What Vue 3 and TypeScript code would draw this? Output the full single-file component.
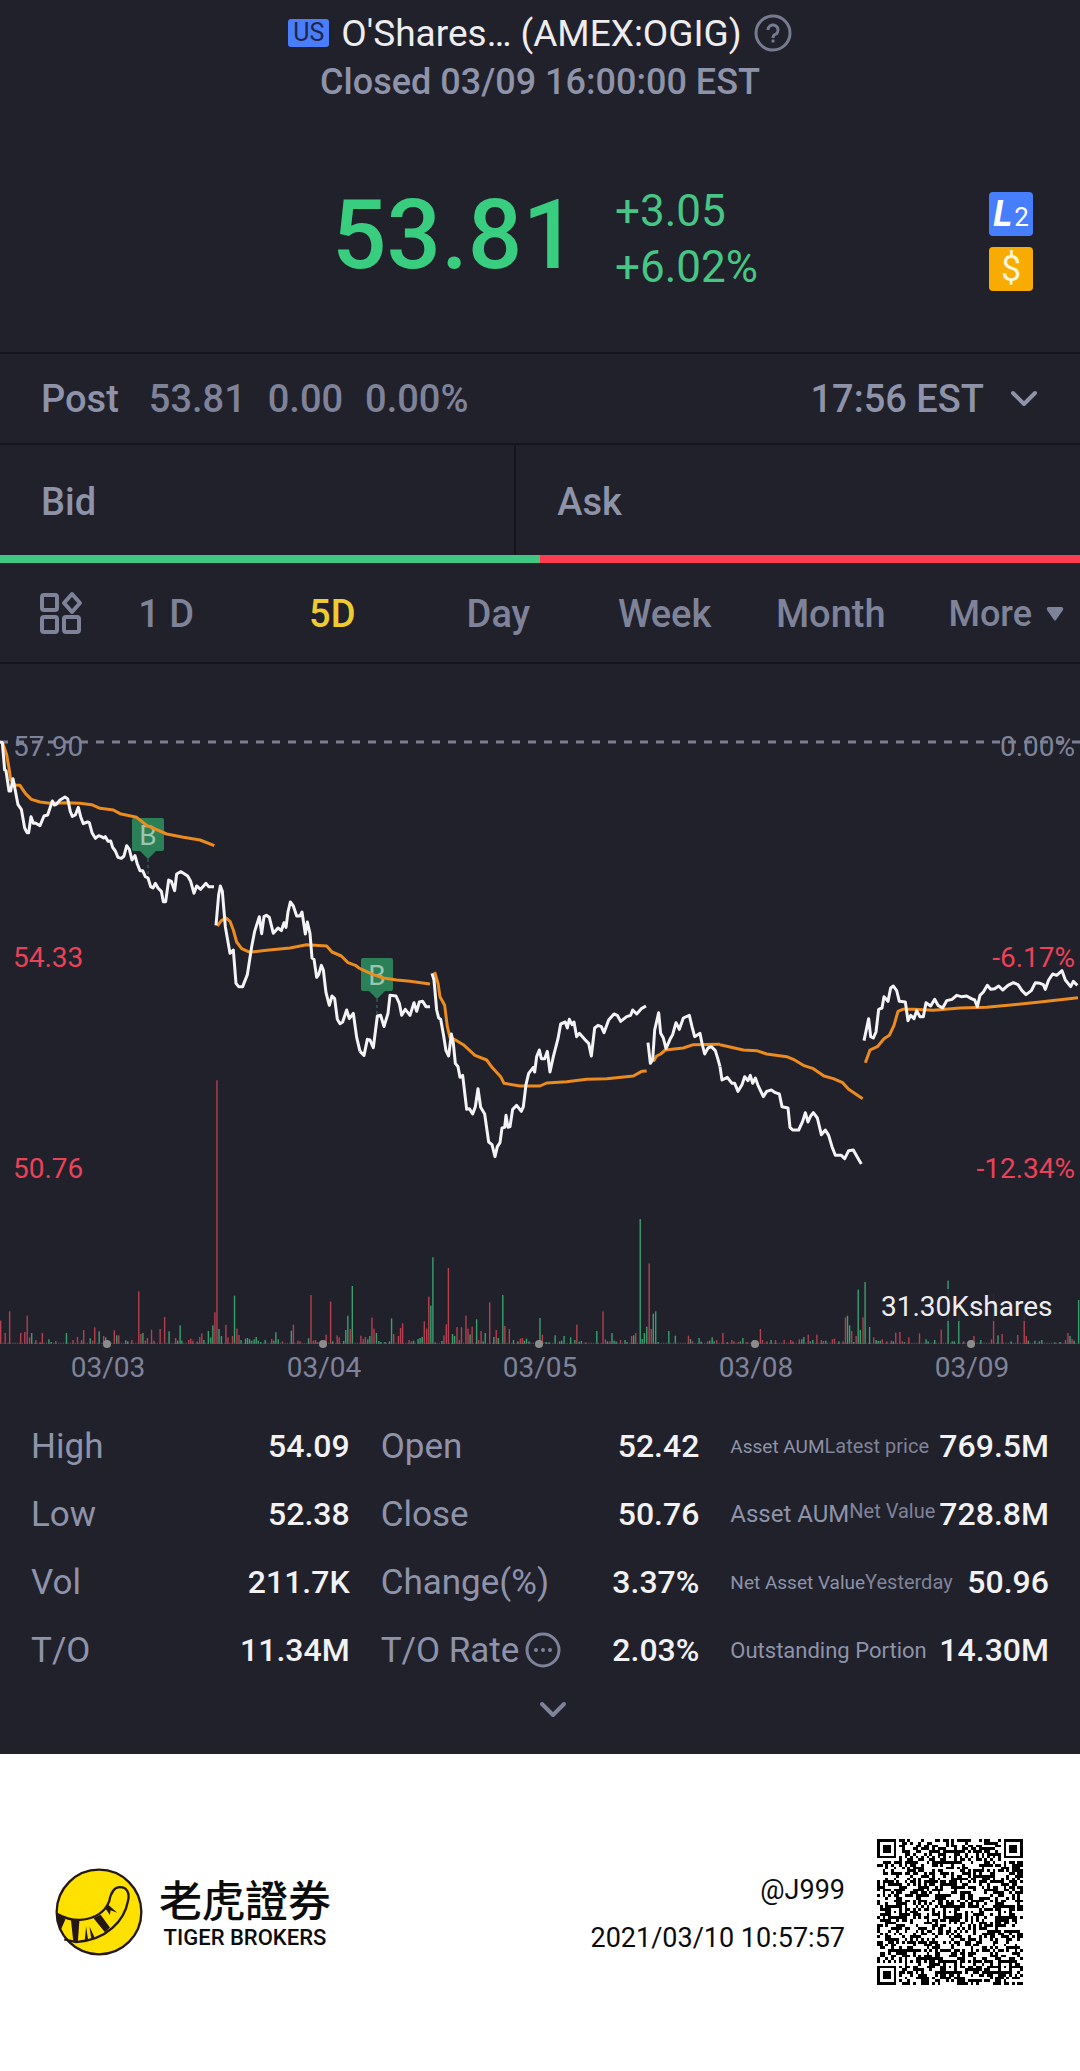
<script setup lang="ts">
import { ref } from 'vue'

interface Stat {
  label: string
  size?: string
  extra?: string
  raised?: boolean
  info?: boolean
  value: string
}

const periods = ['1 D', '5D', 'Day', 'Week', 'Month']
const period = ref('5D')

const columns: Stat[][] = [
  [
    { label: 'High', value: '54.09' },
    { label: 'Low', value: '52.38' },
    { label: 'Vol', value: '211.7K' },
    { label: 'T/O', value: '11.34M' },
  ],
  [
    { label: 'Open', value: '52.42' },
    { label: 'Close', value: '50.76' },
    { label: 'Change(%)', value: '3.37%' },
    { label: 'T/O Rate', info: true, value: '2.03%' },
  ],
  [
    { label: 'Asset AUM', size: 'small', extra: 'Latest price', value: '769.5M' },
    { label: 'Asset AUM', size: 'medium', extra: 'Net Value', raised: true, value: '728.8M' },
    { label: 'Net Asset Value', size: 'small', extra: 'Yesterday', value: '50.96' },
    { label: 'Outstanding Portion', size: 'mid', value: '14.30M' },
  ],
]

const days = [
  { x: 107, label: '03/03' },
  { x: 323, label: '03/04' },
  { x: 539, label: '03/05' },
  { x: 755, label: '03/08' },
  { x: 971, label: '03/09' },
]

// Each panel is a third of the plot; points are relative to its origin.
const panels = [
  {
    at: 'translate(0 168)',
    average: [
      '8,68 20,104 28,150 32,180 46,196 60,196 76,220 94,238 120,246 150,250 200,248 240,250 275,254 300,265 340,270 360,281 410,292 440,316 500,342 550,352 600,360 643,377',
      '652,618 664,602 678,594 690,604 700,630 710,666 725,686 750,697 800,691 870,684 920,674 980,678 996,696 1024,708 1044,728 1066,736 1080,746',
    ],
    price: [
      '0,66 7,68 14,150 18,152 27,213 32,213 39,176 46,212 54,254 64,268 74,324 81,338 86,338 93,290 100,310 106,309 120,317 132,288 143,285 157,243 163,255 170,252 180,240 195,231 203,236 211,275 217,289 226,285 235,262 242,290 250,311 262,306 268,308 276,338 286,355 296,347 304,350 311,354 316,350 324,364 332,363 338,382 346,393 354,412 364,415 372,408 380,377 388,388 396,420 405,407 412,432 420,452 428,452 436,470 444,474 452,500 459,504 466,490 474,504 484,514 490,545 497,545 506,480 514,484 524,512 530,462 543,455 554,462 563,468 572,484 582,520 590,498 602,508 618,490 626,500 642,500',
      '648,616 656,524 661,498 667,514 676,620 690,700 700,690 708,790 716,800 728,800 742,764 755,680 764,634 778,590 785,641 792,590 799,586 808,592 820,640 834,624 844,632 852,608 858,622 864,576 871,546 880,558 890,588 900,588 906,576 916,642 922,606 930,640 936,714 942,718 950,772 956,764 964,736 970,750 978,818 988,856 996,828 1004,836 1012,898 1020,911 1028,906 1040,870 1048,896 1060,880 1070,952 1080,994',
    ],
  },
  {
    at: 'translate(1080 648)',
    average: [
      '0,266 40,284 70,294 110,300 150,304 210,312',
      '224,276 234,310 240,350 254,376 262,440 270,472 290,482 310,494 345,526 380,540 396,562 422,590 432,610 480,618 540,618 560,609 620,605 680,598 740,596 820,588 845,574 860,573',
      '880,544 890,528 902,522 916,510 970,504 1000,494 1080,493',
    ],
    price: [
      '0,514 12,526 22,478 30,480 40,503 52,408 62,406 72,440 84,400 90,346 108,348 118,370 125,406 136,388 150,406 162,368 170,394 178,366 188,364 198,380 210,380',
      '216,280 222,300 230,390 236,414 242,418 250,462 258,512 266,528 274,462 280,490 286,550 294,560 300,592 308,586 320,688 328,686 338,702 346,680 354,626 362,682 374,702 386,786 396,794 405,830 412,800 420,788 426,744 434,742 438,706 444,742 450,740 458,688 470,676 484,694 490,680 498,614 506,580 520,562 524,576 530,530 538,510 544,536 554,536 562,514 570,576 580,530 594,476 602,432 616,426 622,444 628,418 636,434 642,426 650,470 658,460 674,478 686,490 694,528 704,444 714,436 724,440 732,458 746,420 762,402 772,406 782,424 800,410 812,406 818,390 830,402 844,386 858,378',
      '864,488 871,550 878,540 884,450 896,398 902,460 910,474 918,506 930,478 938,464 948,428 958,448 970,414 988,406 996,440 1004,470 1020,460 1026,490 1034,522 1044,504 1054,500 1066,512 1074,538 1080,560',
    ],
  },
  {
    at: 'translate(2160 708)',
    average: [
      '0,434 70,450 110,452 140,462 200,470 220,478 250,496 280,506 312,528 340,536 368,548 386,568 428,596',
      '436,488 450,450 472,440 492,416 508,406 522,376 534,334 548,328 580,328 640,331 720,324 800,322 880,314 960,306 1074,293',
    ],
    price: [
      '0,500 6,540 22,532 36,550 44,550 54,574 66,554 74,530 84,542 91,526 98,550 106,534 114,556 130,590 140,574 154,570 166,578 178,582 186,620 204,624 210,682 218,690 236,690 248,664 256,638 264,666 272,648 280,638 292,654 304,704 316,690 326,706 336,740 346,766 364,766 374,776 386,752 400,750 410,768 424,792',
      '432,422 446,356 452,410 460,414 468,396 476,328 486,324 492,290 504,304 512,264 520,258 530,272 538,304 556,306 564,362 572,346 582,356 590,332 600,350 610,350 618,308 632,318 644,298 654,316 668,324 680,302 696,298 710,286 724,290 740,288 754,296 764,300 772,320 780,286 790,276 802,256 812,268 824,266 836,258 848,270 864,256 880,248 894,254 906,272 918,284 934,272 946,248 960,250 970,254 976,268 986,240 998,222 1010,226 1026,212 1036,240 1052,260 1060,244 1072,256',
    ],
  },
]

// Volume bars: position, height, then u (up) or d (down).
const volumeHalves = [
  '2,70d 15,33d 28,98d 60,33d 72,36d 79,85d 86,20d 92,33u 104,12d 117,5d 123,33d 142,14u 149,6u 162,9d 193,33u 212,12d 225,21d 237,12d 243,42d 262,17u 269,10d 275,50d 288,38u 301,24d 307,20u 332,41d 339,26u 345,26d 365,11u 371,8u 383,12d 403,158d 409,30d 415,33u 422,10d 428,18d 440,43d 447,10d 465,45d 478,81d 491,38u 510,18d 516,10u 523,56u 528,10u 548,12d 554,16d 560,10d 573,8d 580,21d 586,32d 592,12u 605,39u 612,20u 618,56u 624,95d 630,791d 636,45u 643,24u 656,57d 662,20d 675,24d 681,145u 688,46d 694,27d 700,12u 713,16u 719,18u 725,14u 731,10u 738,14u 744,21u 750,10u 757,6u 770,12u 789,15d 795,10u 801,35u 808,14u 820,8d 846,40u 852,58d 865,10d 871,8d 896,17u 903,147d 910,10d 916,12d 922,6d 947,28d 960,127d 966,8u 979,26d 985,20d 998,9u 1004,42u 1010,85u 1017,45d 1023,174u 1048,25d 1055,15d 1061,21d 1068,14u 1074,24u 1080,79d 1086,46d 1093,33u 1100,9u 1106,6u 1118,6u 1131,8u 1137,77u 1143,30d 1157,24d 1163,48d 1169,62d 1188,12d 1195,8d 1201,10u 1214,15u 1220,18u 1226,21u 1232,68d 1239,46d 1245,142d 1251,115u 1257,260u 1264,5d 1283,9u 1289,26d 1296,59d 1302,228d 1314,30u 1320,24u 1327,51d 1334,12d 1340,50d 1353,85d 1359,46d 1365,29u 1371,52d 1384,74u 1390,12d 1397,39d 1403,8u 1409,33u 1422,125d 1434,21u 1441,42d 1447,18u 1460,147u 1466,54d 1479,45d 1491,12u 1504,8u 1511,16d 1517,18d 1523,10u 1529,16u 1536,8u',
  '0,78u 7,28d 18,6u 26,5u 44,26u 57,8u 63,10u 70,24u 89,20u 101,12u 107,58d 114,7u 120,9u 133,5d 165,39u 183,98d 190,14d 196,8u 203,8d 209,33u 215,10u 221,8u 234,12d 247,12u 253,6u 266,24d 272,26u 278,33d 291,375u 297,15u 303,33u 310,52u 317,242d 323,45d 329,91u 336,98u 343,6u 374,39u 393,25u 431,25d 437,15u 443,8d 462,18u 468,7u 487,8d 493,10u 500,20u 506,8u 513,11d 531,33d 544,6d 557,12d 563,8d 576,6d 582,8u 589,18u 601,6d 620,12u 640,45d 646,12d 659,8d 671,12u 684,12d 709,12d 728,12d 734,8d 753,14d 760,14u 766,21u 779,28d 785,8u 792,12u 804,28d 817,12d 823,9d 830,10u 849,14d 855,16d 868,8u 880,8d 887,80d 893,85u 899,56u 905,39d 911,6u 918,24d 924,163u 930,42u 938,80d 944,186u 957,51u 969,20d 976,12u 982,9u 988,10u 994,14d 1007,8d 1020,10d 1026,8u 1033,34d 1045,36d 1052,8d 1058,6u 1071,20d 1102,32d 1121,14u 1127,8u 1146,12u 1165,43d 1185,190u 1197,8u 1203,8u 1216,95u 1230,8d 1254,12u 1260,24d 1280,12u 1311,14d 1317,150d 1330,26u 1342,30d 1368,8u 1387,27d 1406,88d 1412,24d 1418,10u 1437,10u 1450,8u 1457,12u 1495,5u 1510,6u 1526,12d 1533,33d 1539,24u 1545,15d 1551,10u 1564,132u',
]

const bars = volumeHalves.flatMap((half, i) =>
  half.split(' ').map((item) => {
    const [x, rest] = item.split(',')
    return { x: Number(x) + i * 1568, height: parseInt(rest), up: rest.endsWith('u') }
  }),
)

// QR symbol, version 9: finder, timing and alignment patterns plus the data area.
const QR_SIZE = 53

function ring(dx: number, dy: number): number {
  return Math.max(Math.abs(dx), Math.abs(dy))
}

function buildCode(): string {
  let seed = 9173
  const next = () => {
    seed = (seed * 1103515245 + 12345) % 2147483648
    return seed / 2147483648
  }
  const finders = [[3, 3], [49, 3], [3, 49]]
  const aligns = [[26, 6], [6, 26], [26, 26], [46, 26], [26, 46], [46, 46]]
  let path = ''
  for (let y = 0; y < QR_SIZE; y++) {
    for (let x = 0; x < QR_SIZE; x++) {
      let on = next() < 0.5
      if (x === 6 || y === 6) on = (x + y) % 2 === 0
      for (const [cx, cy] of aligns) {
        const r = ring(x - cx, y - cy)
        if (r <= 2) on = r !== 1
      }
      for (const [cx, cy] of finders) {
        const r = ring(x - cx, y - cy)
        if (r <= 4) on = r === 3 || r <= 1
      }
      if (on) path += `M${x} ${y}h1v1h-1z`
    }
  }
  return path
}

const code = buildCode()
</script>

<template>
  <div class="page">
    <main class="quote">
      <header class="head">
        <h1 class="title">
          <span class="market">US</span>
          <span>O'Shares… (AMEX:OGIG)</span>
          <button class="plain help" type="button" aria-label="Help">
            <svg viewBox="0 0 38 38" width="38" height="38" fill="none" stroke="currentColor" stroke-width="3">
              <circle cx="19" cy="19" r="17" />
              <path d="M14 16a5 5 0 1 1 7 4.500q-2 1-2 3.500" />
              <path d="M19 25.500v3" />
            </svg>
          </button>
        </h1>
        <p class="status">Closed 03/09 16:00:00 EST</p>
      </header>

      <section class="price">
        <div class="figures">
          <strong class="last">53.81</strong>
          <div class="change">
            <span>+3.05</span>
            <span>+6.02%</span>
          </div>
        </div>
        <div class="badges">
          <button class="plain badge level" type="button"><i>L</i><span>2</span></button>
          <button class="plain badge dollar" type="button">$</button>
        </div>
      </section>

      <section class="post">
        <span class="name">Post</span>
        <span>53.81</span>
        <span>0.00</span>
        <span>0.00%</span>
        <button class="plain time" type="button">
          17:56 EST
          <svg viewBox="0 0 28 18" width="28" height="18" fill="none" stroke="currentColor" stroke-width="4" stroke-linecap="round" stroke-linejoin="round">
            <path d="M3 3l11 11L25 3" />
          </svg>
        </button>
      </section>

      <section class="book">
        <div class="side">Bid</div>
        <div class="side ask">Ask</div>
      </section>
      <div class="ratio"><span class="buy"></span><span class="sell"></span></div>

      <nav class="tabs">
        <button class="plain grid-icon" type="button" aria-label="Layout">
          <svg viewBox="0 0 44 44" width="44" height="44" fill="none" stroke="currentColor" stroke-width="4">
            <rect x="3" y="4" width="15" height="15" rx="2" />
            <rect x="3" y="26" width="15" height="15" rx="2" />
            <rect x="25" y="26" width="15" height="15" rx="2" />
            <path d="M33 3l8 9-8 9-8-9z" stroke-linejoin="round" />
          </svg>
        </button>
        <button
          v-for="item in periods"
          :key="item"
          type="button"
          class="plain tab"
          :class="{ active: item === period }"
          @click="period = item"
        >{{ item }}</button>
        <button class="plain tab more" type="button">
          More
          <svg viewBox="0 0 18 14" width="18" height="14" fill="currentColor"><path d="M2 0h14q2 1 1 3l-7 10q-1 1-2 0L1 3q-1-2 1-3z" /></svg>
        </button>
      </nav>

      <svg class="chart" viewBox="0 0 1080 720" role="img" aria-label="Five day price and volume">
        <path d="M0 78H1080" class="zero" />
        <g class="axis">
          <text x="13" y="92">57.90</text>
          <text x="1075" y="92" text-anchor="end">0.00%</text>
          <g class="down">
            <text x="13" y="303">54.33</text>
            <text x="13" y="514">50.76</text>
            <text x="1075" y="303" text-anchor="end">-6.17%</text>
            <text x="1075" y="514" text-anchor="end">-12.34%</text>
          </g>
        </g>

        <g v-for="m in [{ x: 148, y: 154 }, { x: 377, y: 294 }]" :key="m.x" :transform="`translate(${m.x} ${m.y})`">
          <path d="M-14 0h28q2 0 2 2v29q0 2-2 2h-6l-8 8-8-8h-6q-2 0-2-2V2q0-2 2-2z" class="flag" />
          <path d="M0 41V58" class="stem" />
          <text y="27" text-anchor="middle" class="flag-text">B</text>
        </g>

        <svg viewBox="0 0 3240 2160" width="1080" height="720">
          <g v-for="panel in panels" :key="panel.at" :transform="panel.at">
            <polyline v-for="line in panel.average" :key="line" :points="line" class="average" />
            <polyline v-for="line in panel.price" :key="line" :points="line" class="last-line" />
          </g>
        </svg>

        <svg y="396" width="1080" height="284" viewBox="0 0 3136 852" preserveAspectRatio="none">
          <rect
            v-for="bar in bars"
            :key="bar.x"
            :x="bar.x - 2"
            :y="852 - bar.height"
            width="4"
            :height="bar.height"
            :class="bar.up ? 'vol-up' : 'vol-down'"
          />
          <path d="M0 850H3136" class="floor" />
        </svg>

        <rect x="878" y="625" width="196" height="32" class="veil" />
        <text x="881" y="652" class="shares">31.30Kshares</text>
        <g v-for="day in days" :key="day.x">
          <circle :cx="day.x" cy="680" r="4" class="dot" />
          <text :x="day.x + 1" y="713" text-anchor="middle" class="axis">{{ day.label }}</text>
        </g>
      </svg>

      <section class="stats">
        <dl v-for="(column, i) in columns" :key="i" class="column">
          <div v-for="stat in column" :key="stat.label + stat.value" class="stat">
            <dt :class="stat.size">
              <span>{{ stat.label }}</span>
              <span v-if="stat.extra" class="extra" :class="{ raised: stat.raised }">{{ stat.extra }}</span>
              <svg v-if="stat.info" viewBox="0 0 36 36" width="36" height="36">
                <circle cx="18" cy="18" r="16" fill="none" stroke="currentColor" stroke-width="3" />
                <circle cx="11" cy="18" r="2" fill="currentColor" />
                <circle cx="18" cy="18" r="2" fill="currentColor" />
                <circle cx="25" cy="18" r="2" fill="currentColor" />
              </svg>
            </dt>
            <dd>{{ stat.value }}</dd>
          </div>
        </dl>
      </section>
      <button class="plain expand" type="button" aria-label="Show more">
        <svg viewBox="0 0 28 18" width="28" height="18" fill="none" stroke="currentColor" stroke-width="4" stroke-linecap="round" stroke-linejoin="round">
          <path d="M3 3l11 11L25 3" />
        </svg>
      </button>
    </main>

    <footer class="share">
      <svg class="logo" viewBox="44 84 266 266" width="88" height="88">
        <circle cx="177" cy="217" r="128" fill="#ffe100" stroke="#231815" stroke-width="7" />
        <g fill="none" stroke="#231815" stroke-width="7">
          <path d="M50 222Q84 242 120 241C168 238 197 214 208 184C213 158 222 142 240 142C262 142 270 160 265 182C254 242 202 302 108 308L72 300" />
        </g>
        <g fill="#231815">
          <path d="M50 224L76 238L62 270Q50 250 50 224z" />
          <path d="M92 239L118 240L113 307L99 304z" />
          <path d="M138 260L134 304L144 302z" />
          <path d="M148 260L154 299L164 295z" />
          <path d="M160 235L182 225L210 264L195 278z" />
          <path d="M196 206L206 196L232 219L212 212L210 226z" />
        </g>
      </svg>
      <div class="brand">
        <span class="cjk" lang="zh-Hant">老虎證券</span>
        <span class="latin">TIGER BROKERS</span>
      </div>
      <div class="user">
        <span>@J999</span>
        <time datetime="2021-03-10T10:57:57">2021/03/10 10:57:57</time>
      </div>
      <svg class="qr" :viewBox="`0 0 ${QR_SIZE} ${QR_SIZE}`" width="146" height="146" shape-rendering="crispEdges" role="img" aria-label="QR code">
        <path :d="code" />
      </svg>
    </footer>
  </div>
</template>

<style>
body {
  margin: 0;
  background: #fff;
}
</style>

<style scoped>
.page {
  font-family: Roboto, "Noto Sans CJK TC", sans-serif;
}

.quote {
  background: #21212b;
  color: #8e93aa;
  font-size: 38px;
}

.plain {
  display: inline-flex;
  align-items: center;
  margin: 0;
  padding: 0;
  border: 0;
  background: none;
  color: inherit;
  font: inherit;
  cursor: pointer;
}

.head {
  padding-top: 9px;
  text-align: center;
}

.title {
  display: flex;
  align-items: center;
  justify-content: center;
  gap: 12px;
  height: 48px;
  margin: 0;
  color: #ededf0;
  font-size: 37px;
  font-weight: 400;
}

.market {
  width: 41px;
  border-radius: 3px;
  background: #4a7dfb;
  color: #1e2747;
  font-size: 25px;
  line-height: 28px;
}

.help {
  color: #777b91;
}

.status {
  margin: 0;
  font-size: 36px;
  font-weight: 500;
  line-height: 50px;
}

.price {
  display: grid;
  grid-template-columns: 1fr auto 1fr;
  align-items: center;
  padding: 76px 47px 57px;
  border-bottom: 2px solid #15151d;
}

.figures {
  display: flex;
  grid-column: 2;
  align-items: center;
  gap: 38px;
  padding-left: 10px;
}

.last {
  padding-bottom: 8px;
  color: #39cd80;
  font-size: 96px;
  font-weight: 500;
  line-height: 104px;
}

.change {
  display: flex;
  flex-direction: column;
  color: #46c584;
  font-size: 44px;
  line-height: 56px;
}

.badges {
  display: flex;
  flex-direction: column;
  justify-self: end;
  gap: 11px;
  padding-top: 4px;
}

.badge {
  justify-content: center;
  width: 44px;
  height: 44px;
  border-radius: 4px;
  color: #fff;
}

.level {
  align-items: baseline;
  gap: 2px;
  background: #477efd;
  font-size: 26px;
  line-height: 44px;
}

.level i {
  font-size: 36px;
  font-weight: 700;
}

.dollar {
  background: #f8ab00;
  color: #fff6d8;
  font-size: 36px;
}

.post {
  display: flex;
  align-items: center;
  gap: 22px;
  height: 89px;
  padding: 0 42px 0 41px;
  border-bottom: 2px solid #15151d;
  color: #7f839a;
  font-weight: 500;
}

.name {
  margin-right: 8px;
  color: #8e93aa;
}

.time {
  gap: 26px;
  margin-left: auto;
  color: #8e93aa;
}

.book {
  display: grid;
  grid-template-columns: 10fr 11fr;
  font-weight: 500;
}

.side {
  padding: 4px 41px 0;
  line-height: 106px;
}

.ask {
  border-left: 2px solid #15151d;
}

.ratio {
  display: flex;
  height: 8px;
}

.ratio span {
  flex: 1;
}

.buy {
  background: #41c883;
}

.sell {
  background: #fc3c51;
}

.tabs {
  display: grid;
  grid-template-columns: 83px repeat(6, 1fr);
  height: 99px;
  border-bottom: 2px solid #15151d;
  color: #7f839a;
  font-weight: 500;
}

.grid-icon {
  justify-content: flex-end;
}

.tab {
  justify-content: center;
  padding-top: 3px;
}

.active {
  color: #eecb2e;
}

.more {
  justify-content: flex-end;
  gap: 14px;
  padding-right: 16px;
  font-size: 36px;
}

.chart {
  display: block;
  width: 100%;
  font-size: 28px;
}

.zero {
  stroke: #7b7e93;
  stroke-width: 3;
  stroke-dasharray: 8 8;
}

.axis {
  fill: #7f839a;
}

.down {
  fill: #ea4258;
}

.flag {
  fill: #2c8058;
}

.stem {
  stroke: #2c8058;
  stroke-width: 1;
  stroke-dasharray: 3 3;
}

.flag-text {
  fill: #9cc6b0;
}

.average,
.last-line {
  fill: none;
  stroke-linejoin: round;
}

.average {
  stroke: #ec8b1e;
  stroke-width: 9;
}

.last-line {
  stroke: #f4f4f6;
  stroke-width: 9;
}

.vol-up {
  fill: #38a26f;
}

.vol-down {
  fill: #b6404f;
}

.floor {
  stroke: #66565f;
  stroke-width: 3;
  stroke-dasharray: 4 3;
}

.veil {
  fill: #21212b;
  fill-opacity: 0.85;
}

.shares {
  fill: #ededf0;
}

.dot {
  fill: #8c8c8c;
}

.stats {
  display: grid;
  grid-template-columns: repeat(3, 1fr);
  gap: 31px;
  padding: 28px 31px 0;
}

.column {
  min-width: 0;
  margin: 0;
}

.stat {
  display: flex;
  align-items: center;
  justify-content: space-between;
  height: 68px;
  white-space: nowrap;
}

dt {
  display: flex;
  align-items: center;
  font-size: 35px;
}

dt svg {
  margin-left: 6px;
  color: #7f839a;
}

dt.small {
  font-size: 19px;
}

dt.mid {
  font-size: 22px;
}

dt.medium {
  font-size: 24px;
}

.extra {
  color: #7f839a;
  font-size: 20px;
}

.raised {
  padding-bottom: 6px;
}

dd {
  margin: 0;
  color: #f2f2f4;
  font-size: 32px;
  font-weight: 500;
}

.expand {
  display: flex;
  justify-content: center;
  width: 100%;
  height: 70px;
  padding: 0 0 18px 26px;
  color: #7f839a;
}

.share {
  display: flex;
  align-items: center;
  padding: 85px 57px 86px 55px;
  background: #fff;
  color: #0c0c0c;
}

.brand {
  display: flex;
  flex-direction: column;
  align-items: center;
  gap: 4px;
  margin-left: 16px;
}

.cjk {
  font-family: "Noto Sans CJK TC", sans-serif;
  font-size: 43px;
  font-weight: 500;
  line-height: 48px;
}

.latin {
  font-size: 22px;
  font-weight: 500;
  line-height: 24px;
}

.user {
  display: flex;
  flex-direction: column;
  align-items: flex-end;
  margin: 0 32px 0 auto;
  padding-top: 4px;
  font-size: 27px;
  line-height: 48px;
}
</style>
